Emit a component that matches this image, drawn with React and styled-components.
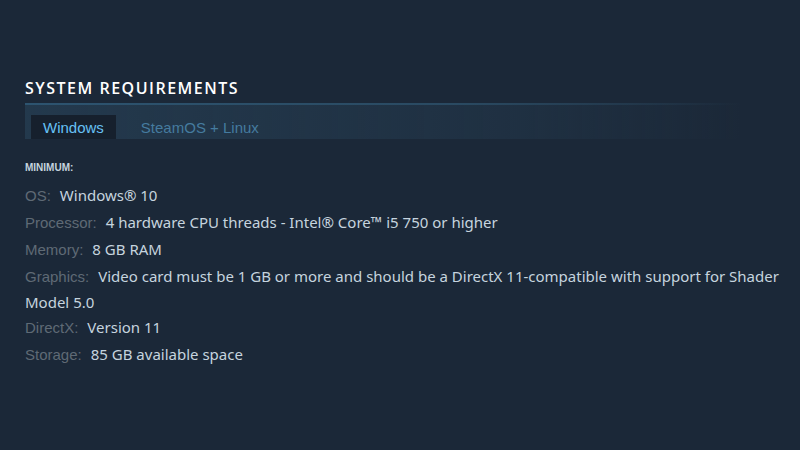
import styled, { createGlobalStyle } from "styled-components";

const Global = createGlobalStyle`
  html, body {
    margin: 0;
    padding: 0;
    background: #1b2838;
  }
  body {
    width: 800px;
    height: 450px;
    overflow: hidden;
  }
`;

const reqs = [
  { label: "OS:", value: "Windows® 10" },
  { label: "Processor:", value: "4 hardware CPU threads - Intel® Core™ i5 750 or higher" },
  { label: "Memory:", value: "8 GB RAM" },
  {
    label: "Graphics:",
    value:
      "Video card must be 1 GB or more and should be a DirectX 11-compatible with support for Shader Model 5.0",
    tight: true,
  },
  { label: "DirectX:", value: "Version 11" },
  { label: "Storage:", value: "85 GB available space" },
];

function App() {
  return (
    <Page>
      <Global />
      <Heading>System Requirements</Heading>
      <TabStrip>
        <Tab active>Windows</Tab>
        <Tab>SteamOS + Linux</Tab>
      </TabStrip>
      <Section>
        <Minimum>Minimum:</Minimum>
        <List>
          {reqs.map((r) => (
            <Item key={r.label} tight={r.tight}>
              <Label>{r.label}</Label>
              {r.value}
            </Item>
          ))}
        </List>
      </Section>
    </Page>
  );
}

export default App;

const Page = styled.div`
  width: 762px;
  padding: 77px 0 0 25px;
  box-sizing: content-box;
  font-family: "Noto Sans", "Open Sans", sans-serif;
`;

const Heading = styled.h2`
  margin: 0;
  font-family: "Open Sans", "Noto Sans", sans-serif;
  font-size: 16px;
  font-weight: 600;
  text-transform: uppercase;
  letter-spacing: 1.5px;
  color: #ffffff;
  line-height: 22px;
  padding-bottom: 4px;
`;

const TabStrip = styled.div`
  width: 710px;
  height: 34px;
  display: flex;
  align-items: flex-end;
  padding-left: 6px;
  border-top: 2px solid transparent;
  border-image: linear-gradient(90deg, #2d5470 0%, #2a4a62 60%, rgba(27, 40, 56, 0) 100%) 1;
  background: linear-gradient(90deg, rgba(42, 71, 94, 0.55) 0%, rgba(42, 71, 94, 0.25) 70%, rgba(27, 40, 56, 0) 100%);
`;

const Tab = styled.div`
  height: 24px;
  display: flex;
  align-items: center;
  padding: 0 12px;
  font-family: "Liberation Sans", Arial, sans-serif;
  font-size: 15px;
  color: ${(p) => (p.active ? "#67c1f5" : "#457b9f")};
  background: ${(p) => (p.active ? "#16202d" : "transparent")};
  margin-right: ${(p) => (p.active ? "13px" : "0")};
`;

const Section = styled.div`
  padding-top: 23px;
`;

const Minimum = styled.div`
  font-family: "Liberation Sans", Arial, sans-serif;
  font-size: 10px;
  font-weight: 700;
  text-transform: uppercase;
  color: #c6d4df;
  margin-bottom: 9px;
`;

const List = styled.ul`
  list-style: none;
  margin: 0;
  padding: 0;
`;

const Item = styled.li.withConfig({ shouldForwardProp: (p) => p !== "tight" })`
  font-size: 15px;
  line-height: 26px;
  color: #c6d4df;
  margin-bottom: ${(p) => (p.tight ? "-1px" : "1px")};
`;

const Label = styled.span`
  font-family: "Liberation Sans", Arial, sans-serif;
  line-height: 1;
  color: #5f6a75;
  margin-right: 9px;
`;
